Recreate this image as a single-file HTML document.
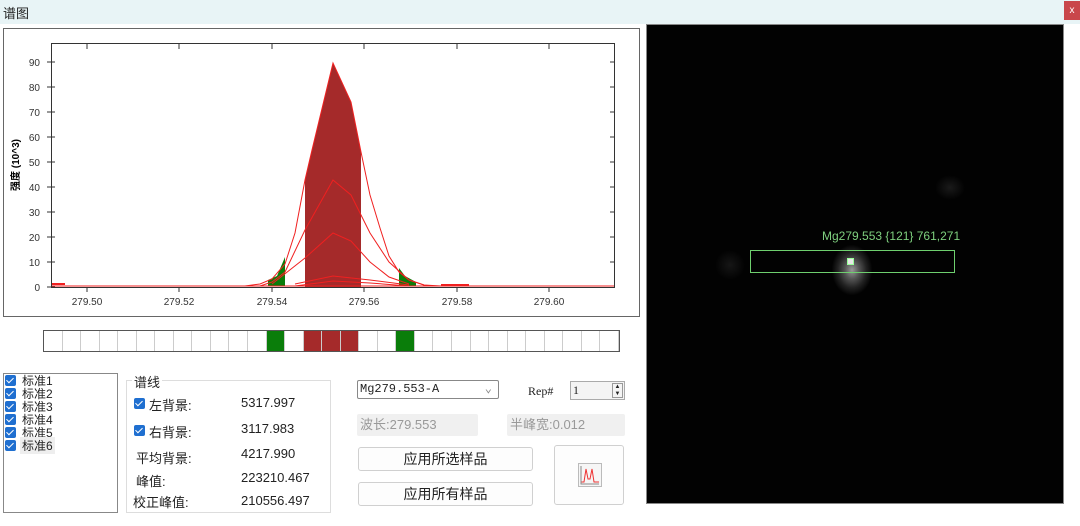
<!DOCTYPE html>
<html><head><meta charset="utf-8"><style>
*{margin:0;padding:0;box-sizing:border-box}
body{width:1080px;height:526px;background:#fff;position:relative;overflow:hidden;font-family:"Liberation Sans","Noto Sans CJK SC",sans-serif;font-size:12px;color:#222}
.abs{position:absolute}
.cb{position:absolute;width:11px;height:11px;background:#1f6fd0;border-radius:2px}
.cb:after{content:"";position:absolute;left:3px;top:1px;width:3px;height:6px;border:solid #fff;border-width:0 1.5px 1.5px 0;transform:rotate(45deg)}
.btn{position:absolute;background:#fdfdfd;border:1px solid #d0d0d0;border-radius:3px;text-align:center;font-size:14px;line-height:22px}
.fld{position:absolute;background:#f0f0f0;border-radius:2px;color:#999;font-size:13px;line-height:22px;padding-left:3px}
</style></head><body>
<div class="abs" style="left:0;top:0;width:1080px;height:24px;background:#e8f4f6"></div>
<div class="abs" style="left:3px;top:3px;font-size:13px">谱图</div>
<div class="abs" style="left:1064px;top:1px;width:16px;height:19px;background:#c9474b;color:#fff;font-size:10px;text-align:center;line-height:19px">x</div>

<svg class="abs" style="left:0;top:0" width="646" height="330">
<rect x="3.5" y="28.5" width="636" height="288" fill="#fff" stroke="#666"/>
<rect x="51.5" y="43.5" width="563" height="244" fill="#fff" stroke="#333"/>
<g font-size="10" fill="#333" text-anchor="end" font-family="Liberation Sans">
<text x="40" y="291">0</text><text x="40" y="266">10</text><text x="40" y="241">20</text><text x="40" y="216">30</text><text x="40" y="191">40</text><text x="40" y="166">50</text><text x="40" y="141">60</text><text x="40" y="116">70</text><text x="40" y="91">80</text><text x="40" y="66">90</text>
</g>
<g stroke="#333"><path d="M47 287h8M47 262h8M47 237h8M47 212h8M47 187h8M47 162h8M47 137h8M47 112h8M47 87h8M47 62h8M610 262h5M610 237h5M610 212h5M610 187h5M610 162h5M610 137h5M610 112h5M610 87h5M610 62h5"/>
<path d="M87 287v5M179 287v5M272 287v5M364 287v5M457 287v5M549 287v5M87 44v5M179 44v5M272 44v5M364 44v5M457 44v5M549 44v5"/></g>
<g font-size="10" fill="#333" text-anchor="middle" font-family="Liberation Sans">
<text x="87" y="305">279.50</text><text x="179" y="305">279.52</text><text x="272" y="305">279.54</text><text x="364" y="305">279.56</text><text x="457" y="305">279.58</text><text x="549" y="305">279.60</text></g>
<text transform="translate(19,165) rotate(-90)" font-size="10" font-weight="bold" text-anchor="middle" font-family="Liberation Sans,Noto Sans CJK SC">强度 (10^3)</text>
<polygon points="305,287 305,180 312,150 333,63 351,102 361,152 361,287" fill="#a52a2a"/>
<polygon points="268,286 268,280 277,276 285,257 285,286" fill="#0a7d0a"/>
<polygon points="399,268 405,276 416,282 416,286 399,286" fill="#0a7d0a"/>
<g fill="none" stroke="#f02020" stroke-width="1">
<polyline points="52,286 614,286"/>
<polyline points="245,286 260,284 272,279 285,264 295,233 305,180 312,150 333,63 351,102 361,152 370,195 380,228 389,256 399,272 409,280 424,285 441,286"/>
<polyline points="260,286 272,282 285,272 305,230 333,180 351,195 370,233 389,262 409,280 424,285"/>
<polyline points="272,284 305,258 333,233 351,241 370,262 389,277 409,284"/>
<polyline points="295,284 333,276 370,280 409,285"/>
<polyline points="295,286 333,281 370,283 409,286"/>
<path d="M52 284h13M441 285h28" stroke-width="2"/>
</g>
</svg>

<div class="abs" style="left:43px;top:330px;width:577px;height:22px;border:1px solid #555;display:flex">
<script>
for(let i=0;i<31;i++){let c='#fff';if(i==12||i==19)c='#0a7d0a';if(i>=14&&i<=16)c='#a52a2a';document.write('<div style="flex:1;background:'+c+';border-right:1px solid #ccc"></div>')}
</script>
</div>

<div class="abs" style="left:3px;top:373px;width:115px;height:140px;border:1px solid #888"></div>
<div class="cb" style="left:5px;top:375px"></div><div class="abs" style="left:22px;top:372px">标准1</div>
<div class="cb" style="left:5px;top:388px"></div><div class="abs" style="left:22px;top:385px">标准2</div>
<div class="cb" style="left:5px;top:401px"></div><div class="abs" style="left:22px;top:398px">标准3</div>
<div class="cb" style="left:5px;top:414px"></div><div class="abs" style="left:22px;top:411px">标准4</div>
<div class="cb" style="left:5px;top:427px"></div><div class="abs" style="left:22px;top:424px">标准5</div>
<div class="cb" style="left:5px;top:440px"></div><div class="abs" style="left:20px;top:437px;background:#eee;padding:0 2px">标准6</div>

<div class="abs" style="left:126px;top:380px;width:205px;height:133px;border:1px solid #ddd"></div>
<div class="abs" style="left:132px;top:372px;background:#fff;padding:0 2px;font-size:13px">谱线</div>
<div class="cb" style="left:134px;top:398px"></div><div class="abs" style="left:149px;top:395px;font-size:13px">左背景:</div><div class="abs" style="left:241px;top:395px;font-size:13px">5317.997</div>
<div class="cb" style="left:134px;top:425px"></div><div class="abs" style="left:149px;top:422px;font-size:13px">右背景:</div><div class="abs" style="left:241px;top:421px;font-size:13px">3117.983</div>
<div class="abs" style="left:136px;top:448px;font-size:13px">平均背景:</div><div class="abs" style="left:241px;top:446px;font-size:13px">4217.990</div>
<div class="abs" style="left:136px;top:471px;font-size:13px">峰值:</div><div class="abs" style="left:241px;top:470px;font-size:13px">223210.467</div>
<div class="abs" style="left:133px;top:492px;font-size:13px">校正峰值:</div><div class="abs" style="left:241px;top:493px;font-size:13px">210556.497</div>

<div class="abs" style="left:357px;top:380px;width:142px;height:19px;border:1px solid #888;border-radius:2px;font-family:'Liberation Mono',monospace;font-size:12px;line-height:17px;padding-left:2px">Mg279.553-A<span style="position:absolute;right:6px;top:0;color:#888">⌄</span></div>
<div class="abs" style="left:528px;top:384px;font-size:12px;font-family:'Liberation Serif',serif">Rep#</div>
<div class="abs" style="left:570px;top:381px;width:55px;height:19px;border:1px solid #aaa;background:#f4f4f4;font-family:'Liberation Serif',serif;line-height:17px;padding-left:2px">1<div style="position:absolute;right:1px;top:1px;width:11px;height:15px;border:1px solid #999;font-size:6px;line-height:7px;text-align:center">▲<br>▼</div></div>
<div class="fld" style="left:357px;top:414px;width:121px;height:22px">波长:279.553</div>
<div class="fld" style="left:507px;top:414px;width:118px;height:22px">半峰宽:0.012</div>
<div class="btn" style="left:358px;top:447px;width:175px;height:24px">应用所选样品</div>
<div class="btn" style="left:358px;top:482px;width:175px;height:24px">应用所有样品</div>
<div class="btn" style="left:554px;top:445px;width:70px;height:60px">
<svg class="abs" style="left:23px;top:17px" width="24" height="24"><rect x="0.5" y="0.5" width="23" height="23" fill="#f6f6f6" stroke="#bbb"/><polyline points="3,19 6,19 8,6 10,16 12,16 14,6 16,19 21,19" fill="none" stroke="#e33" stroke-width="1"/><path d="M3 3v18h18" stroke="#888" fill="none"/></svg>
</div>

<div class="abs" style="left:646px;top:24px;width:418px;height:480px;background:#020202;border:1px solid #888"></div>
<div class="abs" style="left:935px;top:175px;width:30px;height:25px;background:radial-gradient(#1a1a1a,transparent 70%)"></div>
<div class="abs" style="left:715px;top:250px;width:30px;height:30px;background:radial-gradient(#161616,transparent 70%)"></div>
<div class="abs" style="left:832px;top:245px;width:40px;height:50px;background:radial-gradient(ellipse,#999 0%,#555 25%,#222 50%,transparent 72%)"></div>
<div class="abs" style="left:847px;top:258px;width:7px;height:7px;background:#e8e8e8;border:1px solid #9f9"></div>
<div class="abs" style="left:750px;top:250px;width:205px;height:23px;border:1px solid #6ecf6e"></div>
<div class="abs" style="left:822px;top:229px;color:#7fd07f;font-size:12px">Mg279.553 {121} 761,271</div>
</body></html>
